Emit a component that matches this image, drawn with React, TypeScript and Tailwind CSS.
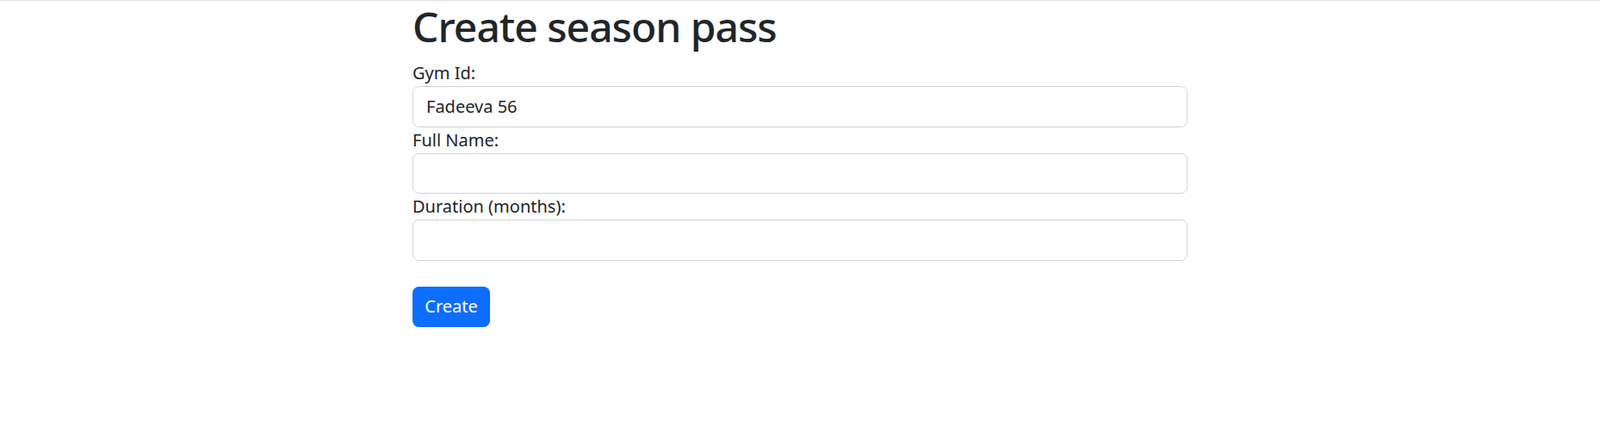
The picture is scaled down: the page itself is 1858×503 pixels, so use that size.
export default function App() {
  const fields = [
    { id: "gymId", label: "Gym Id:", value: "Fadeeva 56" },
    { id: "fullName", label: "Full Name:", value: "" },
    { id: "duration", label: "Duration (months):", value: "" },
  ];

  return (
    <div
      className="min-h-[503px] bg-white border-t border-[#dee2e6] text-[#212529]"
      style={{ fontFamily: '"Noto Sans", "Open Sans", sans-serif' }}
    >
      <div className="w-[900px] mx-auto">
        <h1 className="text-[48px] leading-[59px] font-medium tracking-[-1px] mb-[10px]">Create season pass</h1>
        <form onSubmit={(e) => e.preventDefault()}>
          {fields.map((f) => (
            <div key={f.id}>
              <label htmlFor={f.id} className="block text-[20px] leading-[30px]">
                {f.label}
              </label>
              <input
                id={f.id}
                defaultValue={f.value}
                className="block w-full h-[47.5px] px-[15px] text-[20px] text-[#212529] border border-[#ced4da] rounded-[7.5px] outline-none"
              />
            </div>
          ))}
          <button
            type="submit"
            className="mt-[30px] w-[90px] h-[47.5px] bg-[#0d6efd] text-white text-[20px] rounded-[7.5px]"
          >
            Create
          </button>
        </form>
      </div>
    </div>
  );
}
